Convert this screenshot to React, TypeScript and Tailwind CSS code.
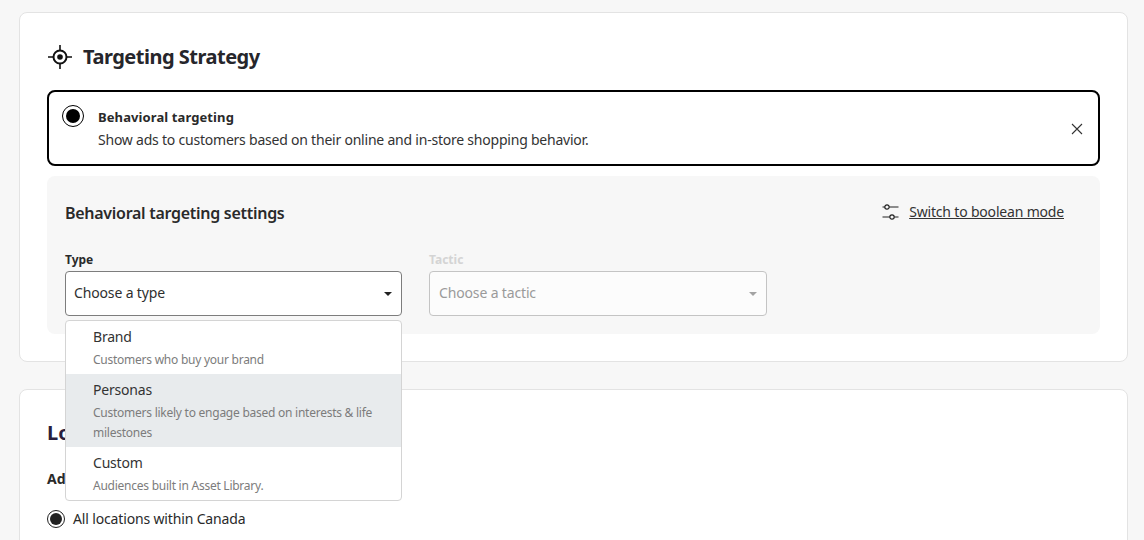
const font = "font-['Noto_Sans',sans-serif]";

const options = [
  { title: "Brand", desc: "Customers who buy your brand", active: false },
  { title: "Personas", desc: "Customers likely to engage based on interests & life milestones", active: true },
  { title: "Custom", desc: "Audiences built in Asset Library.", active: false },
];

function TargetIcon() {
  return (
    <svg width="24" height="24" viewBox="0 0 24 24" fill="none" stroke="#111" strokeWidth="2">
      <circle cx="12" cy="12" r="6.5" />
      <circle cx="12" cy="12" r="2.8" fill="#111" stroke="none" />
      <path strokeWidth="1.6" d="M12 0v5M12 19v5M0 12h5M19 12h5" />
    </svg>
  );
}

function SlidersIcon() {
  return (
    <svg width="18" height="18" viewBox="0 0 18 18" fill="none" stroke="#222" strokeWidth="1.2">
      <path d="M.5 4h2.3M7.3 4h9.2M.5 14h7.3M12.3 14h4.2" />
      <circle cx="5" cy="4" r="2.2" />
      <circle cx="10" cy="14" r="2.2" />
    </svg>
  );
}

function Caret({ muted }: { muted?: boolean }) {
  return <span className={`w-0 h-0 border-x-[4px] border-x-transparent border-t-[4px] ${muted ? "border-t-[#a3a3a3]" : "border-t-[#222]"}`} />;
}

function Select({ label, placeholder, disabled }: { label: string; placeholder: string; disabled?: boolean }) {
  return (
    <div className={disabled ? "w-[338px]" : "w-[337px]"}>
      <div className={`text-[12px] leading-[16px] font-bold mb-[3px] ${disabled ? "text-[#d4d4d4]" : "text-[#2a2a2a]"}`}>{label}</div>
      <div
        className={`h-[45px] rounded-[4px] border flex items-center justify-between pr-[9px] text-[14px] tracking-[-0.15px] ${
          disabled ? "pl-[9px] bg-[#fcfcfc] border-[#c4c4c4] text-[#9a9a9a]" : "pl-[8px] bg-white border-[#7d7d7d] text-[#2f2f2f]"
        }`}
      >
        <span className="-mt-[2px]">{placeholder}</span>
        <Caret muted={disabled} />
      </div>
    </div>
  );
}

export default function App() {
  return (
    <div className={`${font} relative h-[540px] overflow-hidden bg-[#f7f7f7] pl-[19px] pr-[16px] pt-3 text-[#2a2a2a]`}>
      <section className="h-[350px] rounded-lg border border-[#e3e3e3] bg-white px-[27px]">
        <div className="flex items-center gap-[11px] h-[77px] pt-[11px] pl-[1px]">
          <TargetIcon />
          <h2 className="text-[20px] font-bold tracking-[-0.5px] text-[#26262b]">Targeting Strategy</h2>
        </div>
        <div className="h-[76px] rounded-lg border-2 border-black flex items-center justify-between pl-[13px] pr-[15px]">
          <div className="flex gap-[14px] self-start pt-[13px]">
            <span className="w-[22px] h-[22px] rounded-full border border-black flex items-center justify-center">
              <span className="w-[14px] h-[14px] rounded-full bg-black" />
            </span>
            <div className="pt-[1px]">
              <div className="text-[13px] leading-[22px] font-bold tracking-[0.1px]">Behavioral targeting</div>
              <div className="text-[14px] leading-[24px] tracking-[-0.22px] text-[#333]">
                Show ads to customers based on their online and in-store shopping behavior.
              </div>
            </div>
          </div>
          <svg className="mt-[1px]" width="12" height="12" viewBox="0 0 12 12" stroke="#333" strokeWidth="1.1">
            <path d="M1 1l10 10M11 1L1 11" />
          </svg>
        </div>
        <div className="mt-[10px] h-[158px] rounded-lg bg-[#f7f7f7] px-[18px]">
          <div className="h-[76px] flex items-center justify-between pr-[18px]">
            <h3 className="-mt-[3px] text-[16px] font-semibold tracking-[-0.28px]">Behavioral targeting settings</h3>
            <div className="flex items-center gap-[9px] -mt-[5px]">
              <SlidersIcon />
              <a className="text-[14px] underline tracking-[-0.18px] text-[#333]">Switch to boolean mode</a>
            </div>
          </div>
          <div className="flex gap-[27px]">
            <Select label="Type" placeholder="Choose a type" />
            <Select label="Tactic" placeholder="Choose a tactic" disabled />
          </div>
        </div>
      </section>

      <section className="mt-[27px] h-[200px] rounded-lg border border-[#e3e3e3] bg-white px-[27px] pt-[29px]">
        <h2 className="text-[20px] leading-[28px] font-bold text-[#2a1f3d]">Location</h2>
        <div className="mt-[22px] text-[14px] leading-5 font-bold">Ads</div>
        <label className="mt-[20px] flex items-center gap-[8px] text-[14px] leading-5 tracking-[-0.15px]">
          <span className="w-[18px] h-[18px] rounded-full border border-[#222] flex items-center justify-center">
            <span className="w-[12px] h-[12px] rounded-full bg-[#222]" />
          </span>
          All locations within Canada
        </label>
      </section>

      <div className="absolute left-[65px] top-[320px] w-[337px] rounded-[4px] border border-[#d4d4d4] bg-white overflow-hidden">
        {options.map((o) => (
          <div key={o.title} className={`pl-[27px] pr-[20px] pt-[6px] pb-[4px] ${o.active ? "bg-[#e8ebed]" : ""}`}>
            <div className="text-[14px] leading-5 tracking-[-0.2px] text-[#333]">{o.title}</div>
            <div className="mt-[3px] text-[12px] leading-5 tracking-[-0.25px] text-[#7c7c7c]">{o.desc}</div>
          </div>
        ))}
      </div>
    </div>
  );
}
